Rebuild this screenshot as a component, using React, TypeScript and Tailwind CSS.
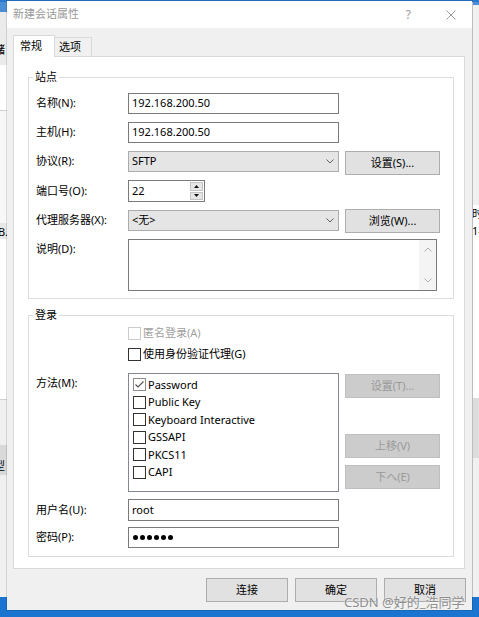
import React from 'react';

type Tone = 'normal' | 'soft' | 'disabled';

const Check = ({ checked = false, tone = 'normal' }: { checked?: boolean; tone?: Tone }) => {
  const border =
    tone === 'disabled' ? 'border-[#cccccc]' : tone === 'soft' ? 'border-[#8c8c8c]' : 'border-[#333333]';
  return (
    <span className={`flex h-[13px] w-[13px] shrink-0 items-center justify-center border bg-white ${border}`}>
      {checked && (
        <svg width="11" height="11" viewBox="0 0 11 11">
          <polyline points="1.5,5.5 4,8 9.5,2.5" fill="none" stroke="#555555" strokeWidth="1.2" />
        </svg>
      )}
    </span>
  );
};

const Chevron = ({ up = false, color = '#606060' }: { up?: boolean; color?: string }) => (
  <svg width="8" height="5" viewBox="0 0 8 5">
    <polyline
      points={up ? '0.5,4.5 4,1 7.5,4.5' : '0.5,0.5 4,4 7.5,0.5'}
      fill="none"
      stroke={color}
      strokeWidth="1"
    />
  </svg>
);

const Btn = ({ label, disabled = false, className = '' }: { label: string; disabled?: boolean; className?: string }) => (
  <div
    className={`flex h-[24px] w-[95px] shrink-0 items-center justify-center border ${
      disabled ? 'border-[#bfbfbf] bg-[#cccccc] text-[#9a9a9a]' : 'border-[#adadad] bg-[#e1e1e1] text-black'
    } ${className}`}
  >
    {label}
  </div>
);

const methods = ['Password', 'Public Key', 'Keyboard Interactive', 'GSSAPI', 'PKCS11', 'CAPI'];

export default function App() {
  return (
    <div className="relative flex h-[617px] w-[479px] flex-col overflow-hidden bg-[#f3f3f3] font-['Noto_Sans','Noto_Sans_CJK_SC',sans-serif] text-[11px] text-black">
      {/* desktop behind the dialog */}
      <div className="h-[2px] bg-[#2b79cf]" />
      <div className="flex flex-1">
        <div className="flex w-[7px] flex-col overflow-hidden">
          <div className="h-[10px] bg-[#4b8ed6]" />
          <div className="flex h-[53px] items-end bg-[#ebebeb] pb-[10px]">
            <span className="-ml-[6px] leading-none">储</span>
          </div>
          <div className="h-[45px] bg-white" />
          <div className="h-px bg-[#cfcfcf]" />
          <div className="h-[112px] bg-[#f7f7f7]" />
          <div className="flex h-[16px] items-center bg-[#e8e8e8]">
            <span className="-ml-[2px] leading-none">B.</span>
          </div>
          <div className="h-[160px] bg-white" />
          <div className="h-px bg-[#cfcfcf]" />
          <div className="h-[45px] bg-[#f0f0f0]" />
          <div className="flex h-[30px] items-end bg-[#d9d9d9] pb-[4px]">
            <span className="-ml-[6px] leading-none">型</span>
          </div>
          <div className="flex-1 bg-[#f0f0f0]" />
        </div>
        <div className="flex-1" />
        <div className="flex w-[7px] flex-col overflow-hidden border-l border-[#d6d6d6]">
          <div className="h-[3px] bg-[#4b8ed6]" />
          <div className="h-[200px] bg-[#f0f0f0]" />
          <div className="flex h-[17px] items-center bg-white">
            <span className="-ml-[1px] leading-none">时</span>
          </div>
          <div className="flex h-[16px] items-center bg-white">
            <span className="-ml-[1px] leading-none">1-</span>
          </div>
          <div className="h-[160px] bg-white" />
          <div className="h-[60px] bg-[#dcdcdc]" />
          <div className="flex-1 bg-[#f0f0f0]" />
        </div>
      </div>
      <div className="h-[20px] bg-[#1b74cf]" />

      {/* dialog window */}
      <div className="absolute left-[7px] top-[1px] flex h-[609px] w-[465px] flex-col bg-[#f0f0f0] shadow-[0_0_0_1px_rgba(0,0,0,0.12)]">
        <div className="flex h-[27px] items-center bg-white pl-[6px] pr-[16px] text-[#9a9a9a]">
          <span>新建会话属性</span>
          <span className="ml-auto mr-[35px] text-[12px]">?</span>
          <svg width="10" height="10" viewBox="0 0 10 10">
            <path d="M0.5 0.5 L9.5 9.5 M9.5 0.5 L0.5 9.5" stroke="#9a9a9a" strokeWidth="1" />
          </svg>
        </div>

        <div className="flex flex-1 flex-col px-[6px] pt-[7px]">
          {/* tabs */}
          <div className="flex h-[21px] items-end">
            <div className="relative z-10 -mb-px flex h-[22px] w-[42px] items-center border-x border-t border-[#d9d9d9] bg-white pb-px pl-[6px]">
              常规
            </div>
            <div className="flex h-[19px] w-[37px] items-center border-r border-t border-[#d9d9d9] bg-[#f0f0f0] pl-[4px]">
              选项
            </div>
          </div>

          {/* tab panel */}
          <div className="h-[513px] w-[452px] border border-[#d9d9d9] bg-white">
            <fieldset className="ml-[14px] mt-[12px] w-[426px] border border-[#dcdcdc]">
              <legend className="ml-[4px] px-[2px] leading-[16px]">站点</legend>
              <div className="flex flex-col gap-2 pb-[7px] pl-[7px] pt-2">
                <div className="flex h-[21px] items-center">
                  <div className="w-[92px]">名称(N):</div>
                  <div className="flex h-[21px] w-[211px] items-center border border-[#7a7a7a] pl-[3px]">192.168.200.50</div>
                </div>
                <div className="flex h-[21px] items-center">
                  <div className="w-[92px]">主机(H):</div>
                  <div className="flex h-[21px] w-[211px] items-center border border-[#7a7a7a] pl-[3px]">192.168.200.50</div>
                </div>
                <div className="flex h-[21px] items-start">
                  <div className="flex h-[21px] w-[92px] items-center">协议(R):</div>
                  <div className="flex h-[21px] w-[211px] items-center justify-between border border-[#acacac] bg-[#e5e5e5] pl-[3px] pr-[4px]">
                    <span>SFTP</span>
                    <Chevron />
                  </div>
                  <Btn label="设置(S)..." className="ml-[6px]" />
                </div>
                <div className="flex h-[22px] items-center">
                  <div className="w-[92px]">端口号(O):</div>
                  <div className="flex h-[22px] w-[77px] border border-[#7a7a7a]">
                    <div className="flex flex-1 items-center pl-[3px]">22</div>
                    <div className="flex w-[15px] flex-col gap-px p-px">
                      <div className="flex flex-1 items-center justify-center border border-[#c4c4c4] bg-[#e6e6e6]">
                        <svg width="5" height="3" viewBox="0 0 5 3"><polygon points="0,3 2.5,0 5,3" fill="#111" /></svg>
                      </div>
                      <div className="flex flex-1 items-center justify-center border border-[#c4c4c4] bg-[#e6e6e6]">
                        <svg width="5" height="3" viewBox="0 0 5 3"><polygon points="0,0 5,0 2.5,3" fill="#111" /></svg>
                      </div>
                    </div>
                  </div>
                </div>
                <div className="flex h-[21px] items-start">
                  <div className="flex h-[21px] w-[92px] items-center">代理服务器(X):</div>
                  <div className="flex h-[21px] w-[211px] items-center justify-between border border-[#acacac] bg-[#e5e5e5] pl-[3px] pr-[4px]">
                    <span>&lt;无&gt;</span>
                    <Chevron />
                  </div>
                  <Btn label="浏览(W)..." className="-mt-px ml-[6px]" />
                </div>
                <div className="flex items-start">
                  <div className="flex h-[21px] w-[92px] items-center">说明(D):</div>
                  <div className="flex h-[52px] w-[309px] border border-[#7a7a7a]">
                    <div className="flex-1" />
                    <div className="flex w-[17px] flex-col items-center justify-between bg-[#f4f4f4] py-[7px]">
                      <Chevron up color="#b0b0b0" />
                      <Chevron color="#b0b0b0" />
                    </div>
                  </div>
                </div>
              </div>
            </fieldset>

            <fieldset className="ml-[14px] mt-[8px] w-[426px] border border-[#dcdcdc]">
              <legend className="ml-[4px] px-[2px] leading-[16px]">登录</legend>
              <div className="flex flex-col pb-[8px] pl-[7px] pt-px">
                <div className="ml-[92px] flex h-[18px] items-center gap-[2px] text-[#a0a0a0]">
                  <Check tone="disabled" />
                  <span>匿名登录(A)</span>
                </div>
                <div className="ml-[92px] mt-[3px] flex h-[18px] items-center gap-[2px]">
                  <Check />
                  <span>使用身份验证代理(G)</span>
                </div>
                <div className="mt-[10px] flex items-start">
                  <div className="flex h-[21px] w-[92px] items-center">方法(M):</div>
                  <div className="h-[119px] w-[211px] border border-[#828790] pl-[4px] pt-[2px]">
                    {methods.map((m, i) => (
                      <div key={m} className="flex h-[17.5px] items-center gap-[2px]">
                        <Check checked={i === 0} tone={i === 0 ? 'soft' : 'normal'} />
                        <span>{m}</span>
                      </div>
                    ))}
                  </div>
                  <div className="ml-[6px] flex flex-col">
                    <Btn label="设置(T)..." disabled className="mt-px" />
                    <Btn label="上移(V)" disabled className="mt-[36px]" />
                    <Btn label="下へ(E)" disabled className="mt-[7px]" />
                  </div>
                </div>
                <div className="mt-[7px] flex h-[22px] items-center">
                  <div className="w-[92px]">用户名(U):</div>
                  <div className="flex h-[22px] w-[211px] items-center border border-[#7a7a7a] pl-[3px]">root</div>
                </div>
                <div className="mt-[6px] flex h-[21px] items-center">
                  <div className="w-[92px]">密码(P):</div>
                  <div className="flex h-[21px] w-[211px] items-center gap-[2px] border border-[#7a7a7a] pl-[4px]">
                    {[0, 1, 2, 3, 4, 5].map((d) => (
                      <span key={d} className="h-[5px] w-[5px] rounded-full bg-black" />
                    ))}
                  </div>
                </div>
              </div>
            </fieldset>
          </div>

          {/* footer buttons */}
          <div className="mt-[9px] flex justify-end gap-[7px]">
            <div className="flex h-[24px] w-[82px] items-center justify-center border border-[#adadad] bg-[#e1e1e1]">连接</div>
            <div className="flex h-[24px] w-[82px] items-center justify-center border border-[#adadad] bg-[#e1e1e1]">确定</div>
            <div className="flex h-[24px] w-[82px] items-center justify-center border border-[#adadad] bg-[#e1e1e1]">取消</div>
          </div>
        </div>
      </div>

      {/* watermark */}
      <div className="absolute left-[344px] top-[594px] text-[13px] leading-[16px] text-[#8e8e8e] [text-shadow:0_0_2px_rgba(255,255,255,0.9)]">
        CSDN @好的_浩同学
      </div>
    </div>
  );
}
